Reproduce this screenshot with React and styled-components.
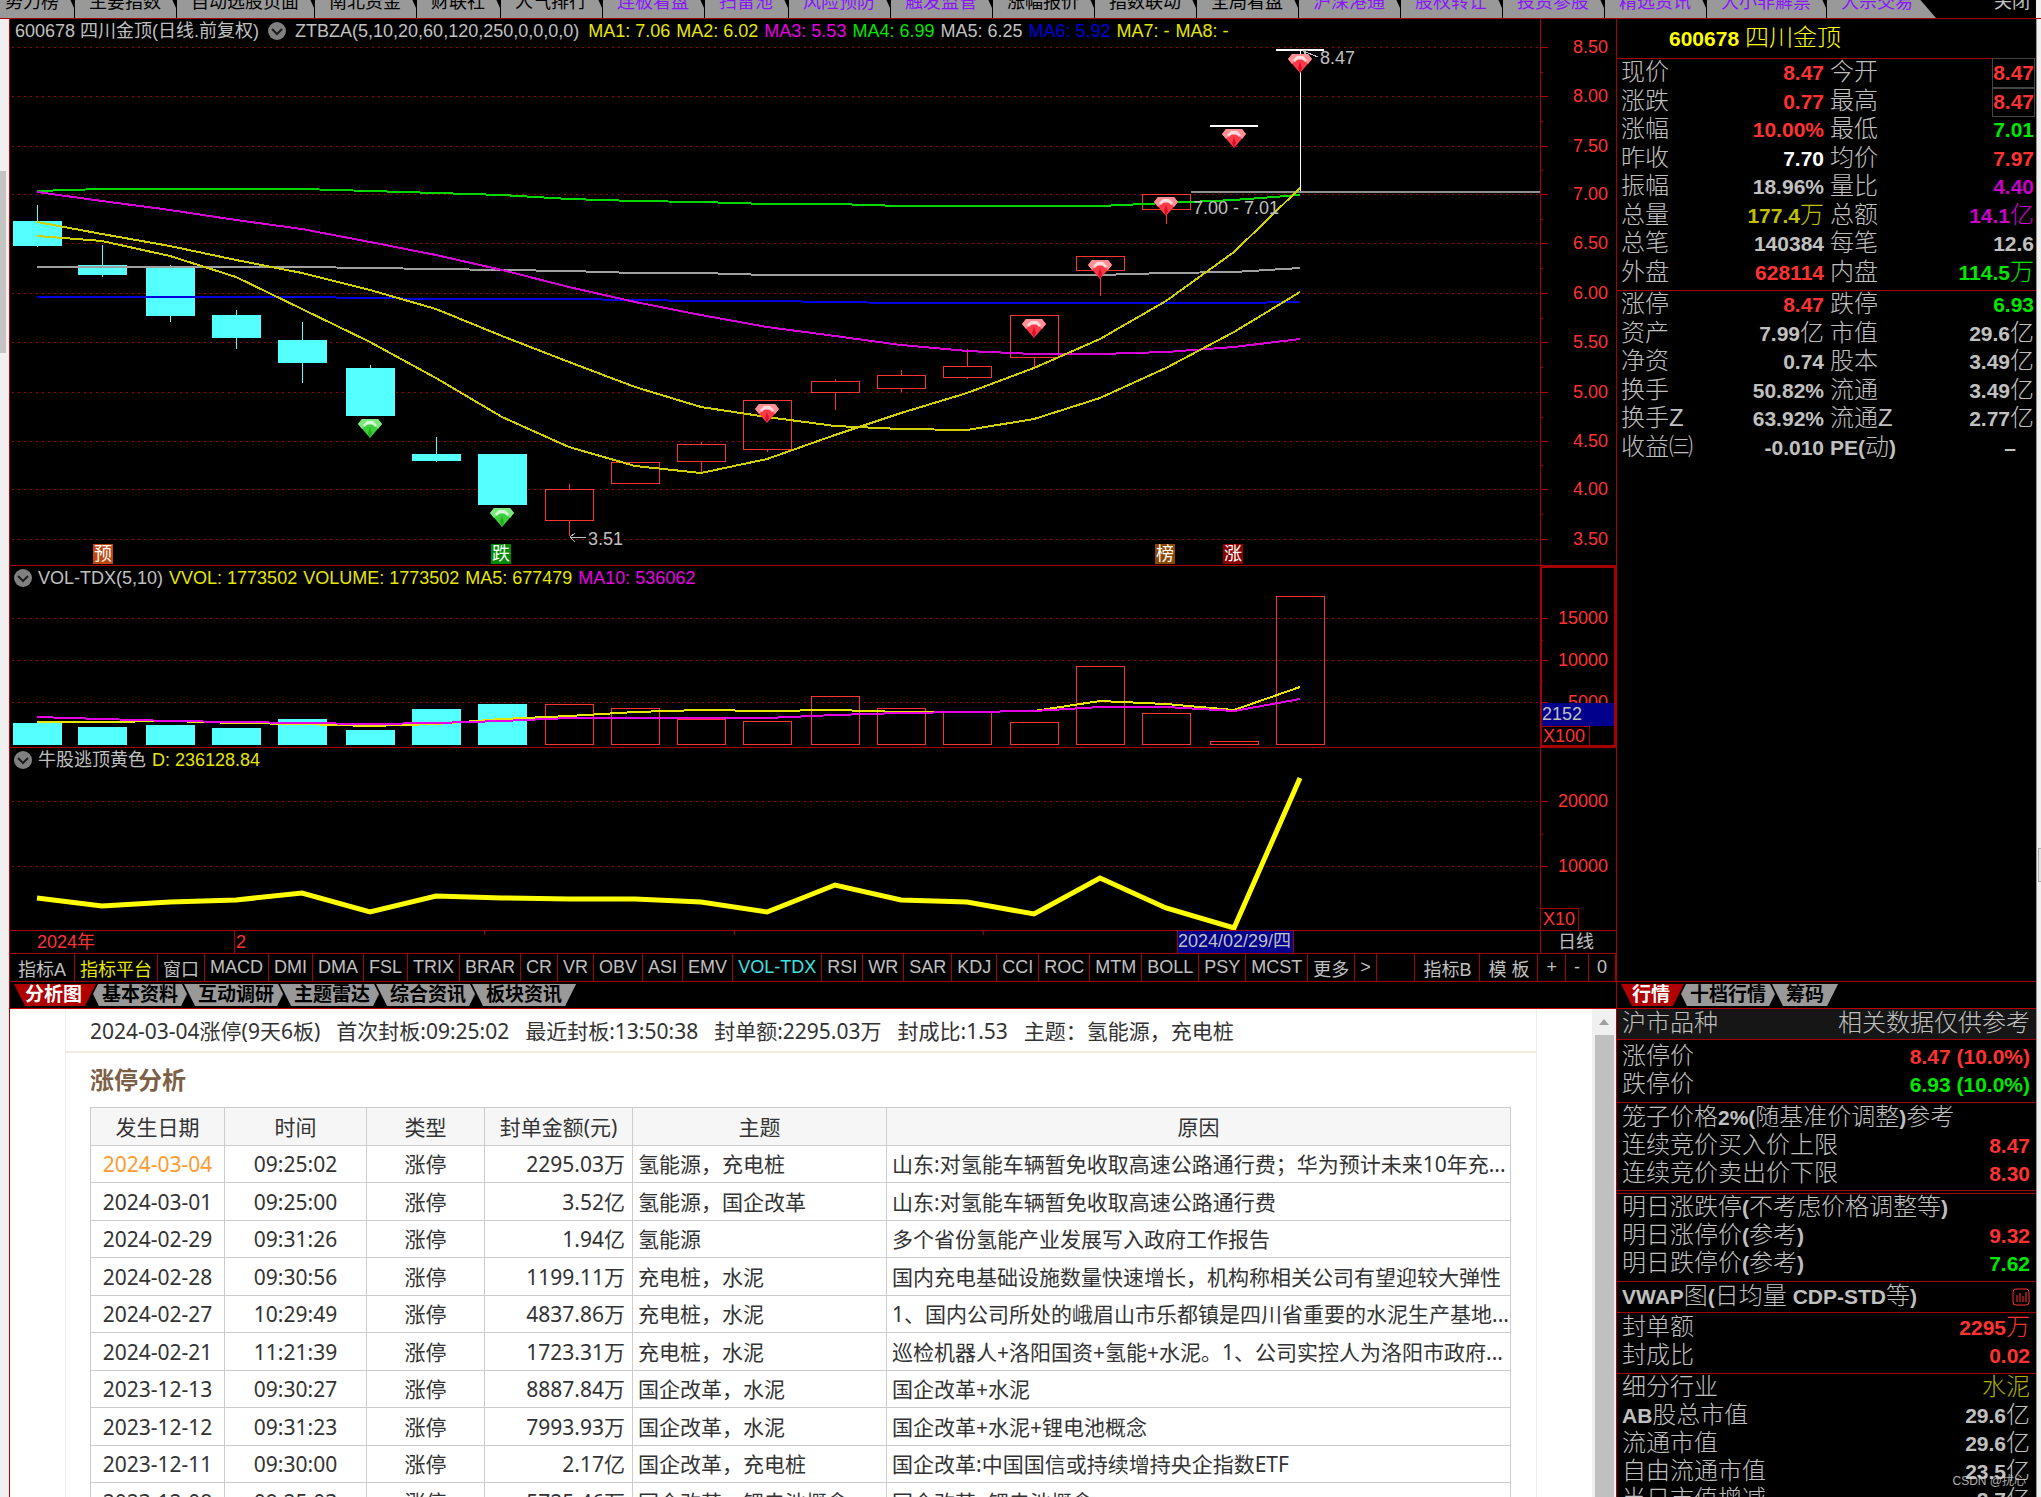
import React, { useState } from 'react';
import styled, { createGlobalStyle } from 'styled-components';

const GlobalStyle = createGlobalStyle`
  * {
    box-sizing: border-box;
  }

  body {
    margin: 0;
    background: #000;
    color: #c0c0c0;
    font-family: 'Liberation Sans', 'Noto Sans CJK SC', sans-serif;
    font-size: 18px;
  }

  button {
    font: inherit;
    color: inherit;
    background: none;
    border: none;
    padding: 0;
    cursor: pointer;
  }
`;

const RED = '#ff3232';
const GREEN = '#00e600';
const YELLOW = '#e6e600';
const MAGENTA = '#e600e6';
const GREY = '#c0c0c0';
const LINE = '#a80000';

const Page = styled.div`
  display: flex;
  flex-direction: column;
  height: 100vh;
  overflow: hidden;
`;

const TopBar = styled.nav`
  display: flex;
  justify-content: space-between;
  height: 18px;
  overflow: hidden;
  background: #000;
  border-right: 5px solid #f0f0f0;
`;

const TopTabs = styled.div`
  display: flex;
  align-items: flex-end;
  margin-left: -10px;
`;

const TopTab = styled.button`
  flex: none;
  height: 30px;
  padding: 2px 15px 4px;
  line-height: 24px;
  white-space: nowrap;
  color: ${(p) => (p.$accent ? '#8a14ff' : '#000')};
  background: linear-gradient(to right, #000 1px, #999 1px);
  clip-path: polygon(0 0, calc(100% - 9px) 0, 100% 20px, 100% 100%, 0 100%);

  &:last-child {
    clip-path: polygon(0 0, calc(100% - 26px) 0, 100% 100%, 0 100%);
    padding-right: 23px;
  }
`;

const CloseButton = styled.button`
  align-self: flex-end;
  padding: 0 6px 4px 0;
  line-height: 24px;
`;

const Body = styled.div`
  flex: 1;
  min-height: 0;
  display: grid;
  grid-template-columns: 9px minmax(0, 1fr) 420px 5px;
  border-top: 1px solid ${LINE};
`;

const Rail = styled.div`
  background: #f0f0f0;
`;

const RailThumb = styled.div`
  width: 6px;
  height: 182px;
  margin-top: 152px;
  background: #c4c4c4;
`;

const RightRail = styled.div`
  background: #f0f0f0;
  border-left: 1px solid #999;
`;

const RightMark = styled.div`
  height: 34px;
  margin: 829px 0 0 1px;
  border: 1px solid #b0b0b0;
  border-right: none;
  background: #e4e4e4;
`;

const Main = styled.main`
  display: flex;
  flex-direction: column;
  min-width: 0;
  min-height: 0;
  border-left: 1px solid #c00000;
`;

const Panel = styled.section`
  position: relative;
  flex: none;
  border-bottom: 1px solid ${LINE};
`;

const PanelHeader = styled.header`
  position: absolute;
  top: 0;
  left: 4px;
  display: flex;
  align-items: center;
  gap: 6px;
  height: 24px;
  line-height: 24px;
  white-space: nowrap;
`;

const HeaderGroup = styled.div`
  display: flex;
  align-items: center;
  gap: ${(p) => (p.$wide ? 9 : 6)}px;
  padding: 0 ${(p) => (p.$wide ? 3 : 0)}px 0 ${(p) => (p.$wide ? 1 : 0)}px;
`;

const HeaderValue = styled.span`
  color: ${(p) => p.$color};
`;

const Collapse = styled.button`
  display: flex;
  width: 18px;
  height: 18px;
`;

const Chart = styled.svg`
  display: block;
  width: 100%;
  height: auto;
  shape-rendering: crispEdges;

  text {
    font-family: 'Liberation Sans', 'Noto Sans CJK SC', sans-serif;
    font-size: 18px;
  }
`;

const IndicatorBar = styled.div`
  display: flex;
  flex: none;
  height: 28px;
  border-bottom: 1px solid ${LINE};
`;

const Indicator = styled.button`
  flex: none;
  padding: 0 5px;
  border-right: 1px solid ${LINE};
  color: ${(p) => p.$color || GREY};
  white-space: nowrap;
`;

const WideIndicator = styled(Indicator)`
  padding: 0 8px;
`;

const IndicatorGap = styled.div`
  flex: 1;
  border-right: 1px solid ${LINE};
`;

const SlantTabs = styled.div`
  display: flex;
  flex: none;
  align-items: center;
  height: 27px;
  padding-left: 4px;
  border-bottom: 1px solid #c00000;
`;

const slantShape = {
  active: 'polygon(0 0, 100% 0, calc(100% - 11px) 100%, 11px 100%)',
  second: 'polygon(10px 0, calc(100% - 10px) 0, calc(100% - 5px) 45%, calc(100% - 11px) 100%, 11px 100%, 5px 45%)',
  middle: 'polygon(0 0, calc(100% - 10px) 0, calc(100% - 5px) 45%, calc(100% - 11px) 100%, 11px 100%)',
  last: 'polygon(0 0, 100% 0, calc(100% - 11px) 100%, 11px 100%)',
};

const SlantTab = styled.button`
  flex: none;
  height: 22px;
  margin-right: -8px;
  padding: 0 14px 0 ${(p) => (p.$shape === 'active' ? 11 : 14)}px;
  font-size: 19px;
  font-weight: bold;
  line-height: 22px;
  color: ${(p) => (p.$shape === 'active' ? '#fff' : '#000')};
  background: ${(p) => (p.$shape === 'active' ? '#b00000' : '#999')};
  clip-path: ${(p) => slantShape[p.$shape]};
`;

const Report = styled.div`
  flex: 1;
  min-height: 0;
  display: grid;
  grid-template-columns: minmax(0, 1fr) 24px;
  background: #fff;
  color: #333;
  font-family: 'Noto Sans', 'Noto Sans CJK SC', sans-serif;
  font-size: 21px;
  overflow: hidden;
`;

const ReportCard = styled.article`
  margin: 0 55px;
  border: solid #eee;
  border-width: 0 1px;
`;

const ReportSummary = styled.p`
  display: flex;
  gap: 16px;
  margin: 0;
  padding: 0 24px;
  height: 44px;
  line-height: 44px;
  white-space: nowrap;
  border-bottom: 2px solid #f3e9dd;
`;

const ReportTitle = styled.h2`
  margin: 0;
  padding: 0 24px;
  height: 54px;
  line-height: 54px;
  font-size: 24px;
  color: #7d5f48;
`;

const ReportTable = styled.table`
  width: calc(100% - 49px);
  margin-left: 24px;
  table-layout: fixed;
  border-collapse: collapse;
  line-height: 24px;

  tr {
    height: 38px;
  }

  tbody tr:nth-child(odd) {
    height: 37px;
  }

  th,
  td {
    padding: 0 5px;
    border: 1px solid #ccc;
    white-space: nowrap;
    overflow: hidden;
    text-align: center;
    font-weight: normal;
  }

  th {
    background: #f6f6f6;
  }

  td:nth-child(4) {
    text-align: right;
    padding-right: 7px;
  }

  td:nth-child(n + 5) {
    text-align: left;
  }
`;

const DateCell = styled.td`
  color: ${(p) => (p.$latest ? '#ff9a2e' : 'inherit')};
`;

const Scrollbar = styled.div`
  display: flex;
  flex-direction: column;
  align-items: center;
  background: #f0f0f0;
`;

const ScrollButton = styled.button`
  height: 26px;
  width: 100%;
  display: flex;
  align-items: center;
  justify-content: center;
`;

const ScrollThumb = styled.div`
  flex: 1;
  width: 19px;
  background: #c0c0c0;
`;

const Side = styled.aside`
  display: flex;
  flex-direction: column;
  min-height: 0;
  overflow: hidden;
  border-left: 1px solid ${LINE};
  font-size: 21px;
  font-weight: bold;
`;

const Cjk = styled.span`
  font-size: 24px;
  font-weight: 300;
  line-height: 24px;
`;

const StockTitle = styled.h1`
  flex: none;
  margin: 0;
  height: 40px;
  padding-left: 52px;
  line-height: 39px;
  font-size: 21px;
  color: #ffff00;
  border-bottom: 1px solid ${LINE};
`;

const QuoteGrid = styled.dl`
  flex: none;
  display: grid;
  grid-template-columns: 86px 117px 6px 1fr;
  grid-template-rows: repeat(${(p) => p.$rows}, 1fr);
  height: ${(p) => p.$height}px;
  margin: 0;
  padding: 0 2px ${(p) => (p.$divided ? 3 : 0)}px 4px;
  line-height: 28px;
  white-space: nowrap;
  border-bottom: ${(p) => (p.$divided ? `1px solid ${LINE}` : 'none')};
`;

const QuoteLabel = styled.dt`
  grid-column: ${(p) => (p.$second ? '4' : '1')};
  grid-row: ${(p) => p.$row};
`;

const QuoteValue = styled.dd`
  grid-column: ${(p) => (p.$second ? '4' : '2')};
  grid-row: ${(p) => p.$row};
  margin: 0;
  justify-self: end;
  color: ${(p) => p.$color || GREY};
  padding: ${(p) => (p.$dash ? '0 18px 0 0' : '0')};
  outline: ${(p) => (p.$boxed ? '1px solid #444' : 'none')};
`;

const Detail = styled.div`
  flex: 1;
  min-height: 0;
  overflow: hidden;
  display: flex;
  flex-direction: column;
  border-top: 1px solid ${LINE};
`;

const SideSpace = styled.div`
  flex: none;
  height: 519px;
`;

const DetailGroup = styled.div`
  flex: none;
  padding: ${(p) => p.$top || 0}px 6px ${(p) => p.$bottom || 0}px 5px;
  background: ${(p) => (p.$shade ? '#161616' : 'transparent')};
  border-bottom: ${(p) => (p.$double ? '4px double' : '1px solid')} ${LINE};
`;

const DetailRow = styled.div`
  display: flex;
  justify-content: space-between;
  align-items: center;
  height: 28px;
  line-height: 28px;
  white-space: nowrap;
`;

const DetailValue = styled.span`
  color: ${(p) => p.$color || GREY};
`;

const Watermark = styled.span`
  position: absolute;
  right: 15px;
  bottom: 8px;
  font-size: 12px;
  line-height: 16px;
  color: #d8d8d8;
  opacity: 0.8;
`;

const topTabs = [
  ['势力榜'], ['主要指数'], ['自动选股页面'], ['南北资金'], ['财联社'], ['人气排行'],
  ['连板看盘', true], ['扫雷池', true], ['风险预防', true], ['触发监管', true],
  ['涨幅报价'], ['指数联动'], ['全局看盘'],
  ['沪深港通', true], ['股权转让', true], ['投资参股', true], ['精选资讯', true],
  ['大小非解禁', true], ['大宗交易', true],
];

const averages = [
  ['MA1: 7.06', YELLOW], ['MA2: 6.02', YELLOW], ['MA3: 5.53', MAGENTA], ['MA4: 6.99', GREEN],
  ['MA5: 6.25', GREY], ['MA6: 5.92', '#0000d8'], ['MA7: -', YELLOW], ['MA8: -', YELLOW],
];

// one trading day per column
const STEP = [37, 102, 170, 236, 302, 370, 436, 502, 569, 635, 701, 767, 835, 901, 967, 1034, 1100, 1166, 1234, 1300];
const BAR = 49;

// [body top, body bottom, high, low] as chart y
const candles = [
  [221, 245, 205, 247], [265, 274, 245, 277], [268, 315, 265, 322], [315, 337, 310, 349],
  [340, 362, 322, 383], [368, 415, 365, 415], [454, 460, 437, 462], [454, 504, 454, 504],
  [489, 520, 484, 536], [462, 483, 462, 483], [444, 461, 442, 472], [400, 449, 400, 452],
  [381, 392, 379, 410], [375, 388, 370, 392], [366, 377, 349, 379], [315, 357, 315, 368],
  [256, 270, 256, 296], [194, 209, 194, 224],
];
const FALLING = 8;

const priceLines = [
  ['#0000e0', [297, 297, 297, 297, 297, 298, 299, 299, 299, 300, 301, 301, 302, 303, 303, 303, 303, 303, 303, 302]],
  ['#a0a0a0', [267, 267, 267, 267, 267, 268, 269, 270, 271, 273, 273, 275, 275, 275, 275, 275, 275, 273, 272, 268]],
  ['#00d800', [191, 189, 189, 189, 189, 191, 193, 195, 199, 201, 202, 204, 204, 206, 206, 206, 206, 203, 200, 195]],
  ['#d800d8', [192, 201, 210, 220, 229, 242, 255, 270, 287, 302, 315, 327, 336, 345, 351, 354, 354, 352, 347, 339]],
  ['#d0d000', [222, 234, 246, 260, 273, 290, 309, 336, 362, 387, 407, 417, 426, 429, 430, 419, 398, 368, 332, 292]],
  ['#d0d000', [236, 241, 256, 277, 309, 342, 378, 417, 447, 466, 473, 459, 435, 413, 393, 368, 339, 301, 252, 188]],
];

const volumes = [723, 727, 725, 728, 719, 730, 709, 704, 704, 708, 719, 721, 696, 708, 711, 722, 666, 713, 741, 596];
const volumeLines = [
  [YELLOW, [722, 722, 721, 723, 724, 726, 724, 719, 716, 712, 710, 711, 710, 712, 712, 711, 701, 704, 710, 687]],
  [MAGENTA, [717, 719, 721, 722, 723, 724, 723, 721, 718, 718, 718, 718, 715, 713, 712, 711, 707, 707, 711, 699]],
];
const escapeLine = [898, 906, 902, 900, 893, 912, 896, 898, 899, 899, 902, 912, 885, 900, 902, 914, 878, 908, 928, 778];

const indicators = [
  'MACD', 'DMI', 'DMA', 'FSL', 'TRIX', 'BRAR', 'CR', 'VR', 'OBV', 'ASI', 'EMV', 'VOL-TDX',
  'RSI', 'WR', 'SAR', 'KDJ', 'CCI', 'ROC', 'MTM', 'BOLL', 'PSY', 'MCST', '更多', '>',
];

const summary = [
  '2024-03-04涨停(9天6板)', '首次封板:09:25:02', '最近封板:13:50:38',
  '封单额:2295.03万', '封成比:1.53', '主题：氢能源，充电桩',
];

const reportRows = [
  ['2024-03-04', '09:25:02', '涨停', '2295.03万', '氢能源，充电桩', '山东:对氢能车辆暂免收取高速公路通行费；华为预计未来10年充...'],
  ['2024-03-01', '09:25:00', '涨停', '3.52亿', '氢能源，国企改革', '山东:对氢能车辆暂免收取高速公路通行费'],
  ['2024-02-29', '09:31:26', '涨停', '1.94亿', '氢能源', '多个省份氢能产业发展写入政府工作报告'],
  ['2024-02-28', '09:30:56', '涨停', '1199.11万', '充电桩，水泥', '国内充电基础设施数量快速增长，机构称相关公司有望迎较大弹性'],
  ['2024-02-27', '10:29:49', '涨停', '4837.86万', '充电桩，水泥', '1、国内公司所处的峨眉山市乐都镇是四川省重要的水泥生产基地...'],
  ['2024-02-21', '11:21:39', '涨停', '1723.31万', '充电桩，水泥', '巡检机器人+洛阳国资+氢能+水泥。1、公司实控人为洛阳市政府...'],
  ['2023-12-13', '09:30:27', '涨停', '8887.84万', '国企改革，水泥', '国企改革+水泥'],
  ['2023-12-12', '09:31:23', '涨停', '7993.93万', '国企改革，水泥', '国企改革+水泥+锂电池概念'],
  ['2023-12-11', '09:30:00', '涨停', '2.17亿', '国企改革，充电桩', '国企改革:中国国信或持续增持央企指数ETF'],
  ['2023-12-08', '09:25:03', '涨停', '5725.46万', '国企改革，锂电池概念', '国企改革+锂电池概念'],
];

const quotes = [
  ['现价', '8.47', RED, '今开', '8.47', RED, true],
  ['涨跌', '0.77', RED, '最高', '8.47', RED, true],
  ['涨幅', '10.00%', RED, '最低', '7.01', GREEN],
  ['昨收', '7.70', '#fff', '均价', '7.97', RED],
  ['振幅', '18.96%', GREY, '量比', '4.40', '#c800c8'],
  ['总量', '177.4万', '#c0c000', '总额', '14.1亿', '#c800c8'],
  ['总笔', '140384', GREY, '每笔', '12.6', GREY],
  ['外盘', '628114', RED, '内盘', '114.5万', GREEN],
];

const finance = [
  ['涨停', '8.47', RED, '跌停', '6.93', GREEN],
  ['资产', '7.99亿', GREY, '市值', '29.6亿', GREY],
  ['净资', '0.74', GREY, '股本', '3.49亿', GREY],
  ['换手', '50.82%', GREY, '流通', '3.49亿', GREY],
  ['换手Z', '63.92%', GREY, '流通Z', '2.77亿', GREY],
  ['收益㈢', '-0.010', GREY, 'PE(动)', '–', GREY],
];

// Latin digits are bold and smaller than the thin Chinese glyphs beside them
const Mixed = ({ children }) =>
  children
    .split(/([\u3000-\u9fffZ]+)/)
    .filter(Boolean)
    .map((part, i) => (/[\u3000-\u9fffZ]/.test(part) ? <Cjk key={i}>{part}</Cjk> : <span key={i}>{part}</span>));

const linePoints = (ys) => ys.map((y, i) => `${STEP[i]},${y}`).join(' ');

const Gem = ({ x, y, green }) => {
  const [rim, body, deep] = green ? ['#7be87b', '#3ccf3c', '#1fae1f'] : ['#ff8f95', '#ff3a48', '#d81228'];
  return (
    <g transform={`translate(${x - 12} ${y - 9})`} shapeRendering="geometricPrecision">
      <path d="M4 0H20L24 5L12 19L0 5Z" fill={body} />
      <path d="M4 0H20L24 5L20 10L16 6H8L4 10L0 5Z" fill={rim} />
      <path d="M5 6L9 2H15L19 6L17 8L14 5H10L7 8Z" fill="#fff" opacity="0.7" />
      <path d="M12 8L14 14L12 19L10 14Z" fill={deep} />
    </g>
  );
};

const Badge = ({ x, text, fill }) => (
  <g>
    <rect x={x} y="544" width="20" height="20" fill={fill} />
    <text x={x + 10} y="560" textAnchor="middle" fill="#fff">{text}</text>
  </g>
);

const Axis = ({ top, bottom, labels, minor }) => (
  <g>
    <path d={`M1540 ${top}V${bottom}`} stroke={LINE} />
    {labels.map(([text, y]) => (
      <g key={text}>
        <path d={`M12 ${y}H1540`} stroke="#a00000" strokeDasharray="2 4" />
        <path d={`M1540 ${y}h8`} stroke={LINE} />
        <text x="1608" y={y + 6} textAnchor="end" fill={RED}>{text}</text>
      </g>
    ))}
    {minor.map((y) => <path key={y} d={`M1540 ${y}h3`} stroke={LINE} />)}
  </g>
);

const CollapseIcon = () => (
  <Collapse aria-label="收起">
    <svg width="18" height="18" viewBox="0 0 18 18">
      <circle cx="9" cy="9" r="9" fill="#808080" />
      <path d="M4 7L9 12L14 7" fill="none" stroke="#1c1c1c" strokeWidth="2" />
    </svg>
  </Collapse>
);

const PriceChart = () => (
  <Chart viewBox="10 19 1606 546">
    <Axis
      top={19}
      bottom={565}
      labels={[['8.50', 47], ['8.00', 96], ['7.50', 146], ['7.00', 194], ['6.50', 243], ['6.00', 293], ['5.50', 342], ['5.00', 392], ['4.50', 441], ['4.00', 489], ['3.50', 539]]}
      minor={[72, 121, 170, 219, 268, 318, 367, 417, 465, 514]}
    />
    {candles.map(([top, bottom, high, low], i) => {
      const color = i < FALLING ? '#54ffff' : RED;
      return (
        <g key={i} stroke={color} fill="none">
          <path d={`M${STEP[i]} ${high}V${top}M${STEP[i]} ${bottom}V${low}`} />
          <rect x={STEP[i] - 24} y={top} width={BAR - 1} height={bottom - top} fill={i < FALLING ? color : 'none'} />
        </g>
      );
    })}
    <path d="M1210 126h48M1276 50h48" stroke="#fff" strokeWidth="2" />
    <path d="M1300 50V192" stroke="#fff" />
    <path d="M1191 192H1540" stroke="#909090" strokeWidth="2" />
    {priceLines.map(([color, ys], i) => (
      <polyline key={i} points={linePoints(ys)} fill="none" stroke={color} strokeWidth="2" />
    ))}
    <Gem x={370} y={428} green />
    <Gem x={502} y={517} green />
    <Gem x={767} y={413} />
    <Gem x={1034} y={328} />
    <Gem x={1100} y={269} />
    <Gem x={1166} y={206} />
    <Gem x={1234} y={138} />
    <Gem x={1300} y={63} />
    <text x="1320" y="64" fill={GREY}>8.47</text>
    <path d="M1318 57L1303 51M1308 50L1303 51L1307 56" fill="none" stroke={GREY} />
    <text x="1193" y="214" fill={GREY}>7.00 - 7.01</text>
    <text x="588" y="545" fill={GREY}>3.51</text>
    <path d="M586 537H570M575 533L570 537L575 542" fill="none" stroke={GREY} />
    <Badge x={93} text="预" fill="#c04810" />
    <Badge x={491} text="跌" fill="#008a00" />
    <Badge x={1155} text="榜" fill="#8c4800" />
    <Badge x={1223} text="涨" fill="#8c0000" />
  </Chart>
);

const VolumeChart = () => (
  <Chart viewBox="10 566 1606 181">
    <Axis
      top={566}
      bottom={747}
      labels={[['15000', 618], ['10000', 660], ['5000', 702]]}
      minor={[640, 681]}
    />
    {volumes.map((y, i) => {
      const color = i < FALLING ? '#54ffff' : RED;
      return <rect key={i} x={STEP[i] - 24} y={y} width={BAR - 1} height={744 - y} stroke={color} fill={i < FALLING ? color : 'none'} />;
    })}
    {volumeLines.map(([color, ys]) => (
      <polyline key={color} points={linePoints(ys)} fill="none" stroke={color} strokeWidth="2" />
    ))}
    <rect x="1541" y="703" width="74" height="23" fill="#00008c" />
    <text x="1542" y="720" fill={GREY}>2152</text>
    <path d="M1541 726H1589V746" fill="none" stroke={LINE} />
    <text x="1543" y="742" fill={RED}>X100</text>
    <rect x="1541" y="567" width="74" height="179" fill="none" stroke={LINE} strokeWidth="2" />
  </Chart>
);

const EscapeChart = () => (
  <Chart viewBox="10 748 1606 182">
    <Axis top={748} bottom={930} labels={[['20000', 801], ['10000', 866]]} minor={[834]} />
    <polyline points={linePoints(escapeLine)} fill="none" stroke="#ffff00" strokeWidth="5" shapeRendering="auto" />
    <path d="M1540 908H1578V930" fill="none" stroke={LINE} />
    <text x="1543" y="925" fill={RED}>X10</text>
  </Chart>
);

const Timeline = () => (
  <Chart viewBox="10 931 1606 22">
    <path d="M234 931V953M1540 931V953M484 931v4M734 931v4M983 931v4" stroke={LINE} />
    <text x="37" y="948" fill={RED}>2024年</text>
    <text x="236" y="948" fill={RED}>2</text>
    <rect x="1177" y="931" width="116" height="22" fill="#00008c" />
    <path d="M1177 931V953M1293 931V953" stroke={LINE} />
    <text x="1178" y="947" fill={GREY}>2024/02/29/四</text>
    <text x="1558" y="948" fill={GREY}>日线</text>
  </Chart>
);

const Quotes = ({ rows, height, divided }) => (
  <QuoteGrid $rows={rows.length} $height={height} $divided={divided}>
    {rows.map(([label, value, color, label2, value2, color2, boxed], i) => (
      <React.Fragment key={label}>
        <QuoteLabel $row={i + 1}><Mixed>{label}</Mixed></QuoteLabel>
        <QuoteValue $row={i + 1} $color={color}><Mixed>{value}</Mixed></QuoteValue>
        <QuoteLabel $row={i + 1} $second><Mixed>{label2}</Mixed></QuoteLabel>
        <QuoteValue $row={i + 1} $second $color={color2} $boxed={boxed} $dash={value2 === '–'}><Mixed>{value2}</Mixed></QuoteValue>
      </React.Fragment>
    ))}
  </QuoteGrid>
);

const Detailed = ({ label, value = '', color }) => (
  <DetailRow>
    <span><Mixed>{label}</Mixed></span>
    <DetailValue $color={color}><Mixed>{value}</Mixed></DetailValue>
  </DetailRow>
);

const VwapIcon = () => (
  <svg width="18" height="18" viewBox="0 0 18 18" fill="none" stroke={RED}>
    <rect x="1" y="1" width="16" height="16" rx="3" />
    <path d="M5 7V14M8 5V14M11 8V14M14 4V14" />
  </svg>
);

const tabShape = (i, active, count) => {
  if (i === active) return 'active';
  if (i === count - 1) return 'last';
  return i === active + 1 ? 'second' : 'middle';
};

const SlantTabBar = ({ tabs }) => {
  const [active, setActive] = useState(0);
  return (
    <SlantTabs role="tablist">
      {tabs.map((tab, i) => (
        <SlantTab key={tab} role="tab" aria-selected={i === active} $shape={tabShape(i, active, tabs.length)} onClick={() => setActive(i)}>
          {tab}
        </SlantTab>
      ))}
    </SlantTabs>
  );
};

const App = () => (
  <Page>
    <GlobalStyle />
    <TopBar>
      <TopTabs>
        {topTabs.map(([label, accent]) => <TopTab key={label} $accent={accent}>{label}</TopTab>)}
      </TopTabs>
      <CloseButton>关闭</CloseButton>
    </TopBar>
    <Body>
      <Rail><RailThumb /></Rail>
      <Main>
        <Panel>
          <PriceChart />
          <PanelHeader>
            <HeaderGroup $wide>
              <span>600678 四川金顶(日线.前复权)</span>
              <CollapseIcon />
              <span>ZTBZA(5,10,20,60,120,250,0,0,0,0)</span>
            </HeaderGroup>
            {averages.map(([text, color]) => <HeaderValue key={text} $color={color}>{text}</HeaderValue>)}
          </PanelHeader>
        </Panel>
        <Panel>
          <VolumeChart />
          <PanelHeader>
            <HeaderGroup>
              <CollapseIcon />
              <span>VOL-TDX(5,10)</span>
            </HeaderGroup>
            <HeaderValue $color={YELLOW}>VVOL: 1773502</HeaderValue>
            <HeaderValue $color={YELLOW}>VOLUME: 1773502</HeaderValue>
            <HeaderValue $color={YELLOW}>MA5: 677479</HeaderValue>
            <HeaderValue $color={MAGENTA}>MA10: 536062</HeaderValue>
          </PanelHeader>
        </Panel>
        <Panel>
          <EscapeChart />
          <PanelHeader>
            <HeaderGroup>
              <CollapseIcon />
              <span>牛股逃顶黄色</span>
            </HeaderGroup>
            <HeaderValue $color={YELLOW}>D: 236128.84</HeaderValue>
          </PanelHeader>
        </Panel>
        <Panel><Timeline /></Panel>
        <IndicatorBar>
          <WideIndicator>指标A</WideIndicator>
          <Indicator $color={YELLOW}>指标平台</Indicator>
          <Indicator>窗口</Indicator>
          {indicators.map((name) => (
            <Indicator key={name} $color={name === 'VOL-TDX' ? '#40e0e0' : GREY}>{name}</Indicator>
          ))}
          <IndicatorGap />
          <WideIndicator>指标B</WideIndicator>
          <WideIndicator>模 板</WideIndicator>
          <WideIndicator>+</WideIndicator>
          <WideIndicator>-</WideIndicator>
          <WideIndicator>0</WideIndicator>
        </IndicatorBar>
        <SlantTabBar tabs={['分析图', '基本资料', '互动调研', '主题雷达', '综合资讯', '板块资讯']} />
        <Report>
          <ReportCard>
            <ReportSummary>
              {summary.map((text) => <span key={text}>{text}</span>)}
            </ReportSummary>
            <ReportTitle>涨停分析</ReportTitle>
            <ReportTable>
              <colgroup>
                <col width="134" />
                <col width="142" />
                <col width="118" />
                <col width="148" />
                <col width="254" />
                <col />
              </colgroup>
              <thead>
                <tr>
                  {['发生日期', '时间', '类型', '封单金额(元)', '主题', '原因'].map((h) => <th key={h} scope="col">{h}</th>)}
                </tr>
              </thead>
              <tbody>
                {reportRows.map(([date, ...cells], i) => (
                  <tr key={date}>
                    <DateCell $latest={i === 0}>{date}</DateCell>
                    {cells.map((cell, j) => <td key={j}>{cell}</td>)}
                  </tr>
                ))}
              </tbody>
            </ReportTable>
          </ReportCard>
          <Scrollbar>
            <ScrollButton aria-label="向上">
              <svg width="10" height="6" viewBox="0 0 10 6"><path d="M5 0L10 6H0Z" fill="#a0a0a0" /></svg>
            </ScrollButton>
            <ScrollThumb />
          </Scrollbar>
        </Report>
      </Main>
      <Side>
        <StockTitle><Mixed>600678 四川金顶</Mixed></StockTitle>
        <Quotes rows={quotes} height={232} divided />
        <Quotes rows={finance} height={171} />
        <SideSpace />
        <Detail>
          <SlantTabBar tabs={['行情', '十档行情', '筹码']} />
          <DetailGroup $shade $top={1} $bottom={1}>
            <DetailRow>
              <span><Mixed>沪市品种</Mixed></span>
              <span><Mixed>相关数据仅供参考</Mixed></span>
            </DetailRow>
          </DetailGroup>
          <DetailGroup $top={3} $bottom={3}>
            <Detailed label="涨停价" value="8.47 (10.0%)" color={RED} />
            <Detailed label="跌停价" value="6.93 (10.0%)" color={GREEN} />
          </DetailGroup>
          <DetailGroup $double $top={1} $bottom={2}>
            <Detailed label="笼子价格2%(随基准价调整)参考" />
            <Detailed label="连续竞价买入价上限" value="8.47" color={RED} />
            <Detailed label="连续竞价卖出价下限" value="8.30" color={RED} />
          </DetailGroup>
          <DetailGroup $bottom={3}>
            <Detailed label="明日涨跌停(不考虑价格调整等)" />
            <Detailed label="明日涨停价(参考)" value="9.32" color={RED} />
            <Detailed label="明日跌停价(参考)" value="7.62" color={GREEN} />
          </DetailGroup>
          <DetailGroup $top={1} $bottom={1}>
            <DetailRow>
              <span><Mixed>VWAP图(日均量 CDP-STD等)</Mixed></span>
              <VwapIcon />
            </DetailRow>
          </DetailGroup>
          <DetailGroup $top={1} $bottom={3}>
            <Detailed label="封单额" value="2295万" color={RED} />
            <Detailed label="封成比" value="0.02" color={RED} />
          </DetailGroup>
          <DetailGroup>
            <Detailed label="细分行业" value="水泥" color="#b0b000" />
            <Detailed label="AB股总市值" value="29.6亿" />
            <Detailed label="流通市值" value="29.6亿" />
            <Detailed label="自由流通市值" value="23.5亿" />
            <Detailed label="当日市值增减" value="2.7亿" />
          </DetailGroup>
        </Detail>
      </Side>
      <RightRail><RightMark /></RightRail>
    </Body>
    <Watermark>CSDN @扰心</Watermark>
  </Page>
);

export default App;
